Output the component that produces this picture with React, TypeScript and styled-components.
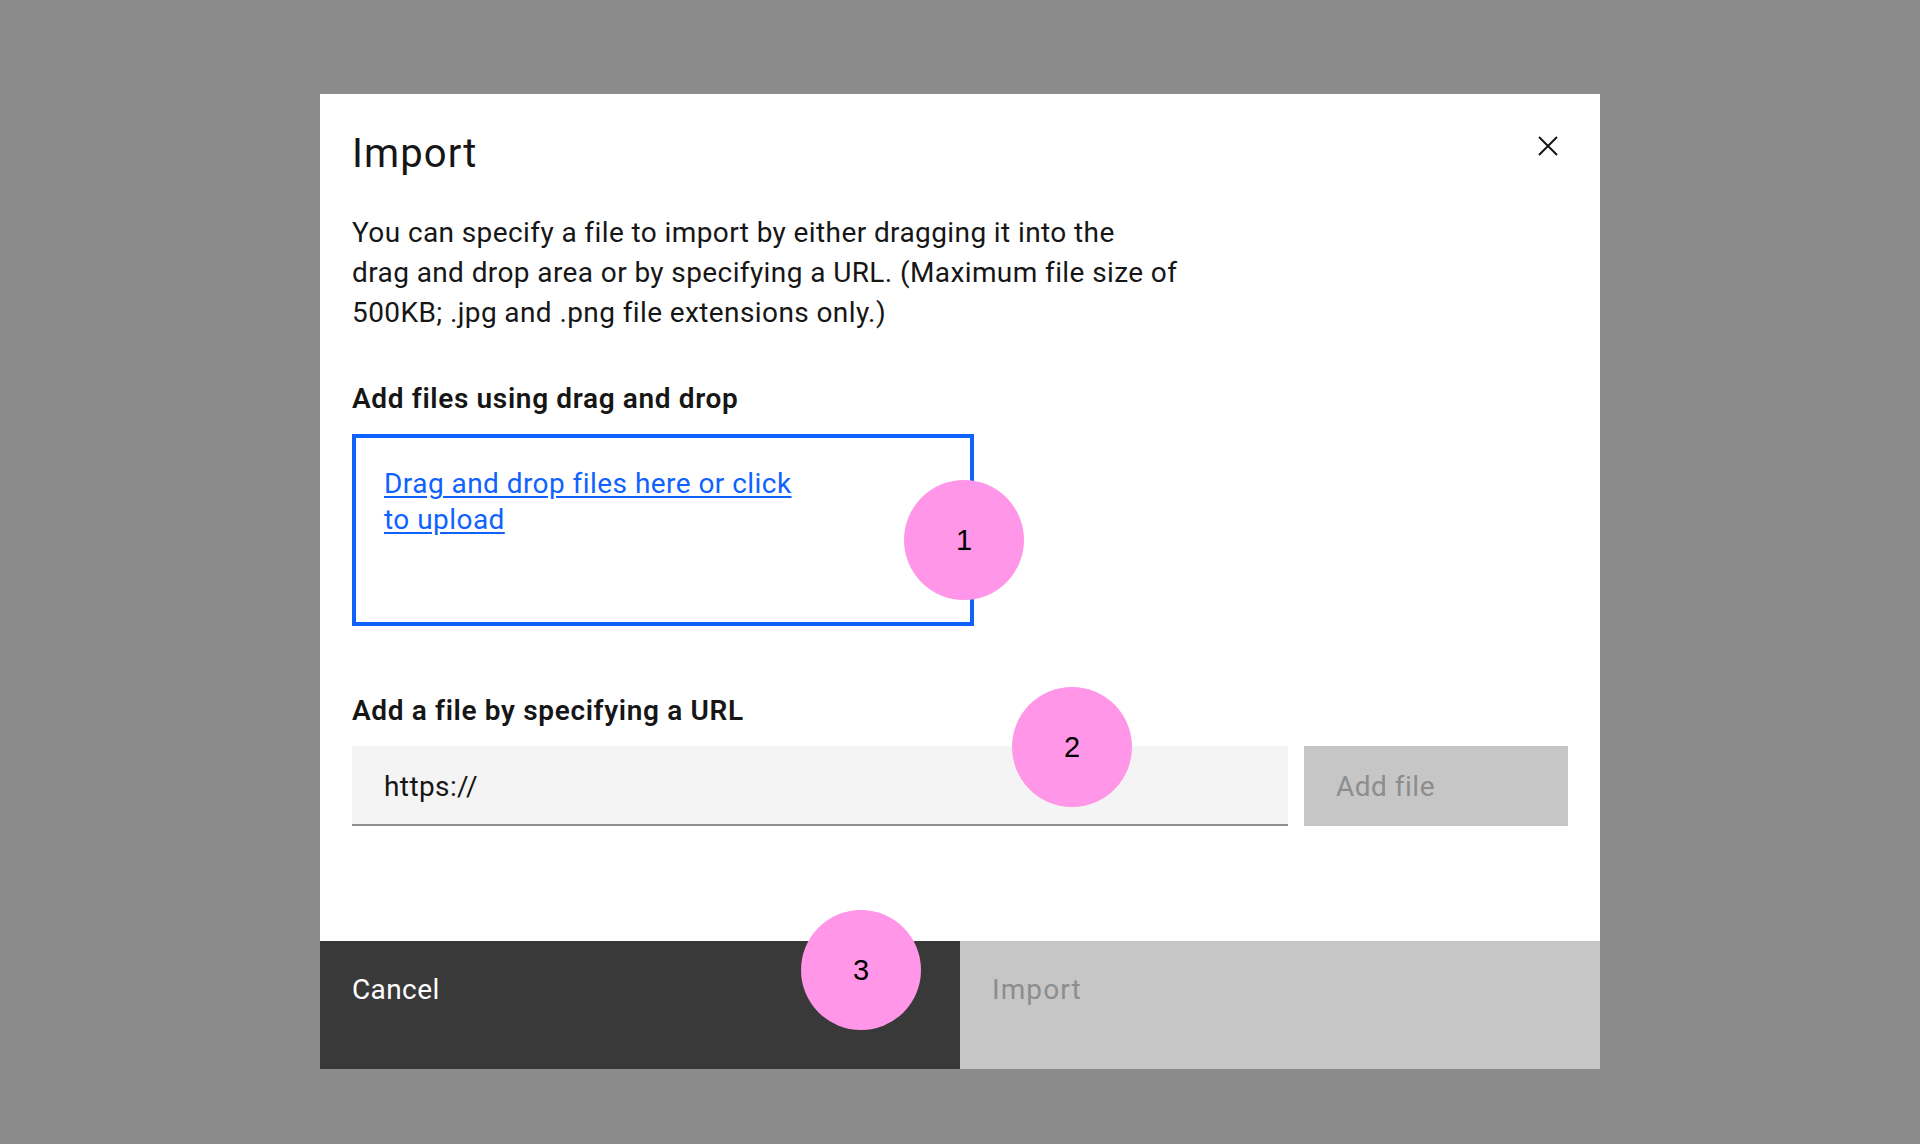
import React from "react";
import styled, { createGlobalStyle } from "styled-components";

const GlobalStyle = createGlobalStyle`
  html, body {
    margin: 0;
    padding: 0;
    background: #8b8b8b;
  }
  body {
    font-family: Roboto, "Noto Sans", "Liberation Sans", sans-serif;
    color: #161616;
  }
  * { box-sizing: border-box; }
`;

const Overlay = styled.div`
  width: 1920px;
  height: 1144px;
  background: #8b8b8b;
  display: flex;
  justify-content: center;
  align-items: flex-start;
  padding-top: 94px;
`;

const Modal = styled.div`
  position: relative;
  width: 1280px;
  height: 975px;
  background: #ffffff;
  display: flex;
  flex-direction: column;
`;

const Header = styled.div`
  padding: 32px 32px 0 32px;
`;

const Title = styled.h2`
  margin: 0;
  font-size: 40px;
  line-height: 56px;
  font-weight: 400;
  letter-spacing: 1.1px;
  color: #161616;
`;

const CloseButton = styled.button`
  position: absolute;
  top: 42px;
  right: 42px;
  width: 20px;
  height: 20px;
  padding: 0;
  border: none;
  background: transparent;
  display: flex;
  align-items: center;
  justify-content: center;
  cursor: pointer;
`;

const Content = styled.div`
  padding: 0 32px;
  margin-top: 31px;
  display: flex;
  flex-direction: column;
`;

const Description = styled.p`
  margin: 0;
  font-size: 28px;
  line-height: 40px;
  font-weight: 400;
  letter-spacing: 0.4px;
  color: #161616;
  white-space: nowrap;
`;

const Label = styled.div<{ $gap: number }>`
  margin-top: ${(p) => p.$gap}px;
  font-size: 28px;
  line-height: 36px;
  font-weight: 600;
  letter-spacing: 0.65px;
  color: #161616;
`;

const DropZone = styled.div`
  margin-top: 17px;
  width: 622px;
  height: 192px;
  border: 4px solid #0f62fe;
  padding: 28px;
`;

const DropLink = styled.a`
  font-size: 28px;
  line-height: 36px;
  letter-spacing: 0.45px;
  color: #0f62fe;
  text-decoration: underline;
  text-underline-offset: 3px;
  cursor: pointer;
`;

const UrlRow = styled.div`
  margin-top: 17px;
  display: flex;
  gap: 16px;
`;

const UrlInput = styled.div`
  width: 936px;
  height: 80px;
  background: #f4f4f4;
  border-bottom: 2px solid #8d8d8d;
  display: flex;
  align-items: center;
  padding: 2px 32px 0 32px;
  font-size: 28px;
  letter-spacing: 0.4px;
  color: #161616;
`;

const AddButton = styled.button`
  width: 264px;
  height: 80px;
  background: #c6c6c6;
  color: #8d8d8d;
  border: none;
  display: flex;
  align-items: center;
  padding: 0 32px;
  font-family: inherit;
  font-size: 28px;
  letter-spacing: 0.5px;
  cursor: not-allowed;
`;

const Footer = styled.div`
  margin-top: auto;
  height: 128px;
  display: grid;
  grid-template-columns: 1fr 1fr;
`;

const FooterButton = styled.button<{ $variant: "secondary" | "disabled" }>`
  border: none;
  height: 128px;
  padding: 31px 32px 0 32px;
  display: flex;
  align-items: flex-start;
  justify-content: flex-start;
  font-family: inherit;
  font-size: 28px;
  line-height: 36px;
  font-weight: 400;
  letter-spacing: ${(p) => (p.$variant === "secondary" ? "0.4px" : "1.1px")};
  background: ${(p) => (p.$variant === "secondary" ? "#393939" : "#c6c6c6")};
  color: ${(p) => (p.$variant === "secondary" ? "#ffffff" : "#8d8d8d")};
  cursor: ${(p) => (p.$variant === "secondary" ? "pointer" : "not-allowed")};
`;

const Marker = styled.div<{ $left: number; $top: number }>`
  position: absolute;
  left: ${(p) => p.$left}px;
  top: ${(p) => p.$top}px;
  width: 120px;
  height: 120px;
  border-radius: 50%;
  background: #ff96e7;
  display: flex;
  align-items: center;
  justify-content: center;
  font-family: "Liberation Sans", Arial, sans-serif;
  font-size: 29px;
  color: #000000;
`;

export default function App() {
  return (
    <>
      <GlobalStyle />
      <Overlay>
        <Modal>
          <Header>
            <Title>Import</Title>
          </Header>
          <CloseButton aria-label="Close">
            <svg width="20" height="20" viewBox="0 0 20 20" fill="none">
              <path d="M1 1 L19 19 M19 1 L1 19" stroke="#161616" strokeWidth="2" />
            </svg>
          </CloseButton>
          <Content>
            <Description>
              You can specify a file to import by either dragging it into the
              <br />
              drag and drop area or by specifying a URL. (Maximum file size of
              <br />
              500KB; .jpg and .png file extensions only.)
            </Description>
            <Label $gap={48}>Add files using drag and drop</Label>
            <DropZone>
              <DropLink>
                Drag and drop files here or click
                <br />
                to upload
              </DropLink>
            </DropZone>
            <Label $gap={67}>Add a file by specifying a URL</Label>
            <UrlRow>
              <UrlInput>https://</UrlInput>
              <AddButton disabled>Add file</AddButton>
            </UrlRow>
          </Content>
          <Footer>
            <FooterButton $variant="secondary">Cancel</FooterButton>
            <FooterButton $variant="disabled" disabled>
              Import
            </FooterButton>
          </Footer>
          <Marker $left={584} $top={386}>1</Marker>
          <Marker $left={692} $top={593}>2</Marker>
          <Marker $left={481} $top={816}>3</Marker>
        </Modal>
      </Overlay>
    </>
  );
}
